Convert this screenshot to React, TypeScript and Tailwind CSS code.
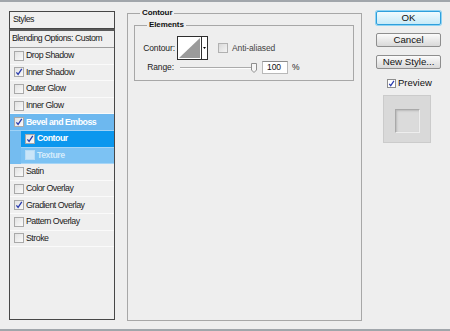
import React from 'react'

interface StyleRow {
  label: string
  checked?: boolean
  kind?: 'bevel' | 'contour' | 'texture'
}

const rows: StyleRow[] = [
  { label: 'Drop Shadow' },
  { label: 'Inner Shadow', checked: true },
  { label: 'Outer Glow' },
  { label: 'Inner Glow' },
  { label: 'Bevel and Emboss', checked: true, kind: 'bevel' },
  { label: 'Contour', checked: true, kind: 'contour' },
  { label: 'Texture', kind: 'texture' },
  { label: 'Satin' },
  { label: 'Color Overlay' },
  { label: 'Gradient Overlay', checked: true },
  { label: 'Pattern Overlay' },
  { label: 'Stroke' },
]

function Check({ checked, faded }: { checked?: boolean; faded?: boolean }) {
  return (
    <span
      className={`w-[10px] h-[10px] border flex items-center justify-center shrink-0 ${
        faded
          ? 'border-[#b7dcf6] bg-[#c9e5f8]'
          : 'border-[#a9a9a9] bg-gradient-to-br from-[#e2e2e2] to-[#fafafa]'
      }`}
    >
      {checked && (
        <svg width="8" height="8" viewBox="0 0 8 8">
          <path d="M1.4 4.3 L3.1 6.4 L6.8 0.9" stroke="#2a3cae" strokeWidth="1.3" fill="none" />
        </svg>
      )}
    </span>
  )
}

function StylesPanel() {
  return (
    <div className="w-[106px] h-[309px] flex flex-col text-[8.8px] tracking-[-0.5px] text-[#1b1b1b]">
      <div className="h-[18px] border border-[#474747] flex items-center pl-[3px] bg-[#f0f0f0]">Styles</div>
      <div className="flex-1 border border-t-[2px] border-[#474747] border-t-[#5a5a5a] bg-[#efefef] flex flex-col">
        <div className="h-[17px] border-b border-[#9d9d9d] flex items-center pl-[2px]">
          Blending Options: Custom
        </div>
        {rows.map((r) => {
          if (r.kind === 'bevel') {
            return (
              <div
                key={r.label}
                className="h-[16.6px] bg-[#6db8ef] border-b border-[#9fd2f6] flex items-center gap-[2px] pl-[4px] text-white font-bold"
              >
                <Check checked />
                {r.label}
              </div>
            )
          }
          if (r.kind === 'contour' || r.kind === 'texture') {
            const bright = r.kind === 'contour'
            return (
              <div key={r.label} className="h-[16.6px] bg-[#74bcf0] flex">
                <div
                  className={`ml-[11px] flex-1 flex items-center gap-[2px] pl-[4px] font-bold border-b border-[#a6d5f7] ${
                    bright ? 'bg-[#0b97ee] text-white' : 'bg-[#7cc2f3] text-[#d3ebfb]'
                  }`}
                >
                  <Check checked={r.checked} faded={!bright} />
                  {r.label}
                </div>
              </div>
            )
          }
          return (
            <div
              key={r.label}
              className="h-[16.6px] border-b border-[#fafafa] flex items-center gap-[2px] pl-[4px]"
            >
              <Check checked={r.checked} />
              {r.label}
            </div>
          )
        })}
      </div>
    </div>
  )
}

function ContourThumb() {
  return (
    <svg width="31" height="24" viewBox="0 0 31 24" className="shrink-0">
      <rect x="0.5" y="0.5" width="30" height="23" fill="#ffffff" stroke="#2e2e2e" />
      <polygon points="2,22 23,2 23,22" fill="#9b9b9b" />
      <line x1="24.5" y1="1" x2="24.5" y2="23" stroke="#2e2e2e" />
      <polygon points="26,11 29,11 27.5,13" fill="#000" />
    </svg>
  )
}

function Button({ label, primary }: { label: string; primary?: boolean }) {
  return (
    <div
      className={`w-[65px] h-[14px] rounded-[2px] flex items-center justify-center text-[9.7px] text-[#111] ${
        primary
          ? 'border border-[#2f9fdc] shadow-[0_0_0_1px_#8fd3f3] bg-gradient-to-b from-[#f1fbfe] to-[#c7eaf8]'
          : 'border border-[#8e8e8e] bg-gradient-to-b from-[#fbfbfb] to-[#d9d9d9]'
      }`}
    >
      {label}
    </div>
  )
}

export default function App() {
  return (
    <div className="w-[450px] h-[331px] bg-[#eeeeee] border-t-2 border-b-2 border-[#a1a6ab] flex items-start pl-[9px] pt-[9px] font-['Liberation_Sans',Arial,sans-serif] overflow-hidden">
      <StylesPanel />

      {/* Contour group */}
      <fieldset className="ml-[12px] -mt-[3px] w-[235px] h-[313px] border border-[#a7a7a7] pt-[2px]">
        <legend className="ml-[12px] px-[2px] text-[8px] leading-[10px] font-bold tracking-[-0.1px] text-[#111]">
          Contour
        </legend>
        <fieldset className="ml-[6px] w-[220px] border border-[#a7a7a7] pt-[6px] pb-[6px]">
          <legend className="ml-[12px] px-[2px] text-[8px] leading-[10px] font-bold tracking-[-0.1px] text-[#111]">
            Elements
          </legend>
          <div className="flex items-center text-[8.5px] tracking-[-0.1px] text-[#1b1b1b]">
            <span className="w-[40px] text-right">Contour:</span>
            <span className="ml-[2px]">
              <ContourThumb />
            </span>
            <span className="ml-[10px] w-[10px] h-[10px] border border-[#b1b1b1] bg-gradient-to-br from-[#d9d9d9] to-[#f4f4f4]" />
            <span className="ml-[4px] text-[#444]">Anti-aliased</span>
          </div>
          <div className="flex items-center mt-[1px] text-[8.5px] tracking-[-0.1px] text-[#1b1b1b]">
            <span className="w-[39px] text-right">Range:</span>
            <div className="ml-[6px] w-[77px] h-[13px] flex items-center">
              <div className="flex-1 h-[2px] border-t border-[#ababab] border-b border-b-[#fdfdfd]" />
              <svg width="6" height="10" viewBox="0 0 6 10" className="shrink-0">
                <path d="M0.5 0.5 H5.5 V7 L3 9.5 L0.5 7 Z" fill="#f6f6f6" stroke="#8f8f8f" />
              </svg>
            </div>
            <div className="ml-[5px] w-[26px] h-[13px] bg-white border border-[#b9b9b9] border-t-[#8c8c8c] flex items-center pl-[4px] text-[#111]">
              100
            </div>
            <span className="ml-[4px]">%</span>
          </div>
        </fieldset>
      </fieldset>

      {/* Buttons */}
      <div className="ml-[14px] mt-0 flex flex-col">
        <div className="flex flex-col gap-[8px]">
          <Button label="OK" primary />
          <Button label="Cancel" />
          <Button label="New Style..." />
        </div>
        <div className="mt-[7px] pl-[11px] flex items-center gap-[2px] text-[9.5px] text-[#111]">
          <span className="w-[9px] h-[9px] border border-[#8d8d8d] bg-white flex items-center justify-center">
            <svg width="7" height="7" viewBox="0 0 8 8">
              <path d="M1.4 4.3 L3.1 6.4 L6.8 0.9" stroke="#2a3cae" strokeWidth="1.4" fill="none" />
            </svg>
          </span>
          Preview
        </div>
        <div className="mt-[5px] ml-[7px] w-[48px] h-[48px] bg-[#d9d9d9] border border-[#cbcbcb] flex items-center justify-center pt-[3px]">
          <div className="w-[25px] h-[24px] bg-[#dbdbdb] border border-t-[#a9a9a9] border-l-[#a9a9a9] border-r-[#eeeeee] border-b-[#eeeeee] shadow-[inset_1px_1px_2px_#b9b9b9]" />
        </div>
      </div>
    </div>
  )
}
